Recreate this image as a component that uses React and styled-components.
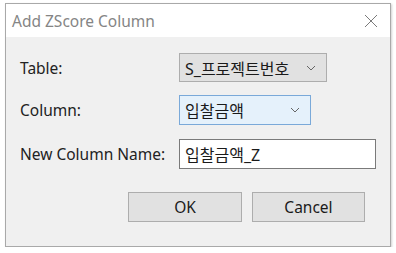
import styled, { createGlobalStyle } from "styled-components";

const GlobalStyle = createGlobalStyle`
    html, body {
        margin: 0;
        background: #ffffff;
    }
    body {
        font-family: "Noto Sans", "Noto Sans CJK KR", sans-serif;
    }
`;

const Dialog = styled.div`
    margin: 3px 0 0 5px;
    width: 384px;
    height: 242px;
    border: 1px solid #a9a9a9;
    box-shadow: 1px 1px 2px rgba(0, 0, 0, 0.18);
    display: flex;
    flex-direction: column;
    background: #f0f0f0;
`;

const TitleBar = styled.div`
    height: 33px;
    background: #ffffff;
    display: flex;
    align-items: center;
    justify-content: space-between;
    padding: 0 12px 0 6px;
`;

const Title = styled.div`
    font-size: 15.5px;
    color: #858585;
`;

const Body = styled.div`
    flex: 1;
    padding: 16px 0 0 14px;
    display: flex;
    flex-direction: column;
`;

const Row = styled.div`
    display: flex;
    align-items: center;
    height: ${(p) => p.$h}px;
    margin-bottom: ${(p) => p.$gap}px;
`;

const Label = styled.div`
    width: 159px;
    font-size: 15.5px;
    color: #222;
`;

const Select = styled.div`
    box-sizing: border-box;
    height: 100%;
    width: ${(p) => p.$w}px;
    display: flex;
    align-items: center;
    justify-content: space-between;
    padding: 0 10px 0 5px;
    font-size: 16px;
    color: #1a1a1a;
    background: ${(p) => (p.$focused ? "#e5f1fb" : "#e1e1e1")};
    border: 1px solid ${(p) => (p.$focused ? "#7aa9d9" : "#adadad")};
`;

const Input = styled.div`
    box-sizing: border-box;
    height: 100%;
    width: 197px;
    display: flex;
    align-items: center;
    padding: 0 5px;
    font-size: 16px;
    color: #1a1a1a;
    background: #ffffff;
    border: 1px solid #7a7a7a;
`;

const Buttons = styled.div`
    display: flex;
    gap: 10px;
    margin-left: 108px;
    height: 30px;
`;

const Button = styled.div`
    box-sizing: border-box;
    width: ${(p) => p.$w}px;
    height: 100%;
    display: flex;
    align-items: center;
    justify-content: center;
    font-size: 15.5px;
    color: #1a1a1a;
    background: #e1e1e1;
    border: 1px solid #adadad;
`;

function Chevron() {
    return (
        <svg width="10" height="6" viewBox="0 0 10 6">
            <path d="M1 1 L5 5 L9 1" fill="none" stroke="#666" strokeWidth="1" />
        </svg>
    );
}

function CloseIcon() {
    return (
        <svg width="14" height="14" viewBox="0 0 14 14">
            <path d="M1 1 L13 13 M13 1 L1 13" stroke="#7a7a7a" strokeWidth="1" fill="none" />
        </svg>
    );
}

export default function App() {
    return (
        <>
            <GlobalStyle />
            <Dialog>
                <TitleBar>
                    <Title>Add ZScore Column</Title>
                    <CloseIcon />
                </TitleBar>
                <Body>
                    <Row $h={29} $gap={13}>
                        <Label>Table:</Label>
                        <Select $w={148}>
                            <span>S_프로젝트번호</span>
                            <Chevron />
                        </Select>
                    </Row>
                    <Row $h={30} $gap={14}>
                        <Label>Column:</Label>
                        <Select $w={132} $focused>
                            <span>입찰금액</span>
                            <Chevron />
                        </Select>
                    </Row>
                    <Row $h={30} $gap={23}>
                        <Label>New Column Name:</Label>
                        <Input>입찰금액_Z</Input>
                    </Row>
                    <Buttons>
                        <Button $w={114}>OK</Button>
                        <Button $w={113}>Cancel</Button>
                    </Buttons>
                </Body>
            </Dialog>
        </>
    );
}
